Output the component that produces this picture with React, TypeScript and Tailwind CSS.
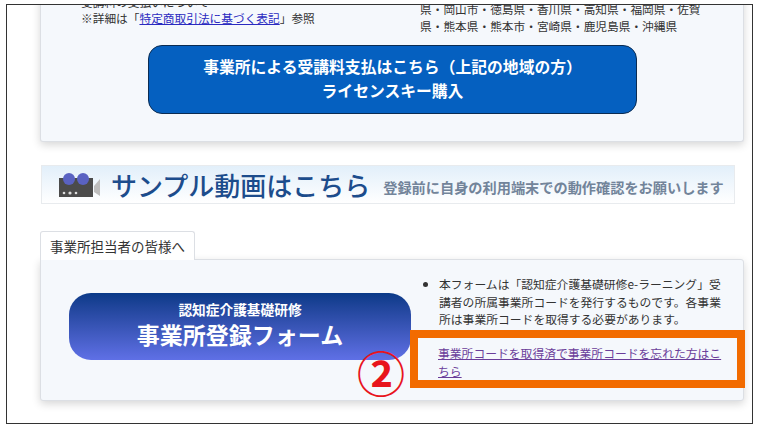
const FONT = "font-['Noto_Sans_CJK_JP','Liberation_Sans',sans-serif]"

function CameraIcon() {
  return (
    <svg width="42" height="24" viewBox="0 0 42 24" className="shrink-0">
      <rect x="0" y="5" width="34" height="19" fill="#4b4b4b" />
      <circle cx="10" cy="6" r="6" fill="#5a62c2" />
      <circle cx="24" cy="6" r="6" fill="#5a62c2" />
      <circle cx="5" cy="20" r="1.3" fill="#ddd" />
      <circle cx="11" cy="20" r="1.6" fill="#ddd" />
      <circle cx="17" cy="20" r="1.3" fill="#ddd" />
      <path d="M35 13 L41 6 V23 L35 19 Z" fill="#bdbdbd" />
    </svg>
  )
}

export default function App() {
  return (
    <div className={`h-[431px] w-[759px] overflow-hidden bg-white pl-[6px] pt-[4px] ${FONT}`}>
      <div className="relative h-[420px] w-[747px] overflow-hidden border border-[#333] bg-white">
        {/* Upper card, scrolled off the top */}
        <div className="ml-[33px] mt-[-16px] h-[153px] w-[704px] rounded-b-[3px] border-b border-r border-l border-[#dcdfe4] bg-[#f5f8fc] shadow-[0_3px_8px_rgba(0,0,0,0.16)]">
          <div className="flex pl-[40px] pt-[4px] text-[11.7px] leading-[17px] text-[#333]">
            <div className="w-[339px]">
              <p>受講料の支払いについて</p>
              <p className="mt-[-1px]">
                ※詳細は「<span className="text-[#2a2ac0] underline">特定商取引法に基づく表記</span>」参照
              </p>
            </div>
            <div className="w-[290px] pt-[7px]">
              <p>県・岡山市・徳島県・香川県・高知県・福岡県・佐賀</p>
              <p>県・熊本県・熊本市・宮崎県・鹿児島県・沖縄県</p>
            </div>
          </div>
          <div className="ml-[107px] mt-[11px] flex h-[69px] w-[489px] flex-col items-center justify-center rounded-[14px] border border-[#0b2c52] bg-[#0560c0] pb-[2px] text-[15.8px] font-bold leading-[24px] text-white">
            <span>事業所による受講料支払はこちら（上記の地域の方）</span>
            <span>ライセンスキー購入</span>
          </div>
        </div>

        {/* Sample video banner */}
        <div className="ml-[34px] mt-[23px] flex h-[39px] w-[694px] items-center border border-[#e8ebee] bg-gradient-to-b from-[#e2effa] to-white pl-[17px]">
          <CameraIcon />
          <span className="ml-[10px] text-[26px] font-medium leading-none text-[#1c4c8c]">サンプル動画はこちら</span>
          <span className="ml-[13px] mt-[5px] text-[14.2px] font-bold leading-none text-[#72849a]">登録前に自身の利用端末での動作確認をお願いします</span>
        </div>

        {/* Tab + lower card */}
        <div className="ml-[33px] mt-[27px] w-[704px]">
          <div className="relative z-10 mb-[-1px] flex h-[29px] w-[155px] items-center justify-center rounded-t-[3px] border border-b-0 border-[#dcdfe4] bg-white text-[13.5px] text-[#333]">
            事業所担当者の皆様へ
          </div>
          <div className="flex h-[142px] rounded-b-[3px] rounded-tr-[3px] border border-[#dcdfe4] bg-[#f5f8fc] pl-[28px] pt-[15px] shadow-[0_3px_8px_rgba(0,0,0,0.16)]">
            <div className="mt-[18px] flex h-[67px] w-[342px] shrink-0 flex-col items-center justify-center rounded-[22px] bg-gradient-to-b from-[#0a3a88] to-[#5f70e6] pb-[6px] font-bold text-white">
              <span className="text-[13.7px] leading-[20px]">認知症介護基礎研修</span>
              <span className="text-[23px] leading-[30px]">事業所登録フォーム</span>
            </div>
            <div className="ml-[27px] w-[285px] text-[11.8px] leading-[17.5px] text-[#333]">
              <ul className="list-disc pl-[1px]">
                <li>本フォームは「認知症介護基礎研修e-ラーニング」受講者の所属事業所コードを発行するものです。各事業所は事業所コードを取得する必要があります。</li>
              </ul>
              <a className="mt-[16px] block leading-[18px] text-[#6a3d9a] underline">事業所コードを取得済で事業所コードを忘れた方はこちら</a>
            </div>
          </div>
        </div>

        {/* Annotation overlay */}
        <div className="absolute left-[403px] top-[325px] h-[58px] w-[335px] border-[8px] border-[#f26b00]" />
        <span className="absolute left-[350px] top-[334px] text-[48px] font-bold leading-[64px] text-[#e8141c]">②</span>
      </div>
    </div>
  )
}
